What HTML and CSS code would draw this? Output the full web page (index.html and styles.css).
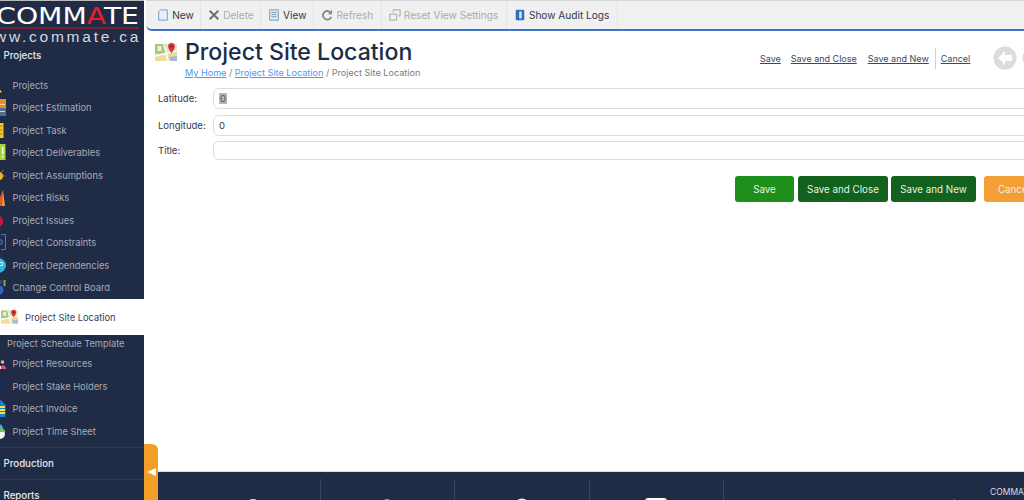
FILE: index.html
```html
<!DOCTYPE html>
<html lang="en">
<head>
<meta charset="utf-8">
<title>Project Site Location</title>
<link rel="stylesheet" href="styles.css">
</head>
<body>
<svg class="defs" width="0" height="0">
  <symbol id="map" viewBox="0 0 22 21">
    <rect x="0" y="2" width="22" height="17" fill="#dfe8c4"/>
    <path d="M0 2h11v10H0z" fill="#a9c67c"/>
    <path d="M0 14 9 11l3 8H0z" fill="#f0dc94"/>
    <path d="M12 12l10-2v9H14z" fill="#f0d98a"/>
    <path d="M14 15l8-1v5h-6z" fill="#9dbde0"/>
    <path d="M0 13 22 8v1.500L0 15z" fill="#fff" opacity=".85"/>
    <path d="M8 2l4 17h2L10 2z" fill="#fff" opacity=".85"/>
    <path d="M2.500 4h4v5h-4z" fill="#e8efd8"/>
    <path d="M16.500 1a3.400 3.400 0 0 1 3.400 3.400C19.900 7 16.500 11 16.500 11s-3.400-4-3.400-6.600A3.400 3.400 0 0 1 16.500 1z" fill="#d4383a"/>
    <circle cx="16.500" cy="4.400" r="1.100" fill="#7d1c20"/>
  </symbol>
</svg>
<div class="app">
  <aside class="sidebar">
    <div class="logo">
      <div class="logo-name"><span class="logo-word">COMM<span class="logo-a">A</span>TE</span></div>
      <div class="logo-url">www.commate.ca</div>
    </div>
    <div class="group-title group-first">Projects</div>
    <ul class="menu">
      <li class="item"><svg class="ico" viewBox="-11 0 17 17"><path d="M-1 10.500 2 15.500H-4z" fill="#f2c230"/></svg><span>Projects</span></li>
      <li class="item"><svg class="ico" viewBox="-11 0 17 17"><rect x="-2" y="0" width="8" height="9" fill="#ee8a2a"/><rect x="-2" y="9" width="8" height="8" fill="#56688f"/><rect x="0" y="5" width="5" height="1" fill="#fbd9b0"/><rect x="0" y="12" width="5" height="1" fill="#c5cfe0"/></svg><span>Project Estimation</span></li>
      <li class="item"><svg class="ico" viewBox="-11 0 17 17"><rect x="-3" y="1" width="6.500" height="15" fill="#f5c829"/><path d="M-1 4H2.500M-1 8H2.500M-1 12H2.500" stroke="#a5791a"/></svg><span>Project Task</span></li>
      <li class="item"><svg class="ico" viewBox="-11 0 17 17"><rect x="-3" y="0" width="8.500" height="16" fill="#a4d63c"/><rect x="2" y="3" width="1.500" height="7" fill="#fff"/><rect x="2" y="11.500" width="1.500" height="2" fill="#fff"/></svg><span>Project Deliverables</span></li>
      <li class="item"><svg class="ico" viewBox="-11 0 17 17"><circle cx="-1" cy="9" r="4" fill="#f0b429"/><path d="M-1 1v3M3 3 2 5M5 9H3" stroke="#a07a3a"/></svg><span>Project Assumptions</span></li>
      <li class="item"><svg class="ico" viewBox="-11 0 17 17"><path d="M3 1 5 17H-3z" fill="#ef9a22"/><path d="M3 1 2 17H-3z" fill="#e4562a"/></svg><span>Project Risks</span></li>
      <li class="item"><svg class="ico" viewBox="-11 0 17 17"><circle cx="-3" cy="9.500" r="6" fill="#d5103c"/></svg><span>Project Issues</span></li>
      <li class="item"><svg class="ico" viewBox="-11 0 17 17"><path d="M1 .5H5.500V15.500H1" fill="none" stroke="#5a76ad"/><path d="M0 6H2V10H0" fill="none" stroke="#5a76ad"/></svg><span>Project Constraints</span></li>
      <li class="item"><svg class="ico" viewBox="-11 0 17 17"><circle cx="-1.500" cy="8.500" r="7.500" fill="#2cb6dc"/><circle cx="1" cy="7" r="1.800" fill="none" stroke="#e8f7fb"/></svg><span>Project Dependencies</span></li>
      <li class="item"><svg class="ico" viewBox="-11 0 17 17"><circle cx="-1.500" cy="11" r="5" fill="#2f66c4"/><rect x="3.500" y="1" width="2" height="6" fill="#7ab648"/><rect x="0" y="1" width="2" height="4" fill="#3c4a66"/></svg><span>Change Control Board</span></li>
      <li class="item-active"><svg class="ico-active"><use href="#map"/></svg><span>Project Site Location</span></li>
      <li class="item-plain">Project Schedule Template</li>
      <li class="item"><svg class="ico" viewBox="-11 0 17 17"><circle cx="2.500" cy="7" r="1.800" fill="#e8b48c"/><path d="M0 14c0-5 6-5 6 0z" fill="#e8467a"/><rect x="-1" y="11" width="2" height="3" fill="#f3f3f3"/></svg><span>Project Resources</span></li>
      <li class="item"><svg class="ico" viewBox="-11 0 17 17"><rect x="1.500" y="1" width="2.500" height="15" fill="#14305e"/></svg><span>Project Stake Holders</span></li>
      <li class="item"><svg class="ico" viewBox="-11 0 17 17"><path d="M-3 5 1 0l4.500 5v12H-3z" fill="#1a7fd4"/><path d="M-3 7H5M-3 10H5M-3 13H5" stroke="#f5e23a" stroke-width="1.800"/></svg><span>Project Invoice</span></li>
      <li class="item"><svg class="ico" viewBox="-11 0 17 17"><circle cx="0" cy="11" r="5" fill="#f4f4f4"/><path d="M-3 7 1 1 4 7z" fill="#5fa8d3"/><path d="M-5 7H5V9H-5z" fill="#7fc241"/></svg><span>Project Time Sheet</span></li>
    </ul>
    <div class="group-title group-divided">Production</div>
    <div class="group-title group-divided">Reports</div>
  </aside>
  <button class="collapse" type="button" aria-label="Collapse"></button>
  <main class="main">
    <nav class="toolbar">
      <a class="tool"><svg class="tool-ico" viewBox="0 0 14 14"><path d="M4 1h8v12H2V3z" fill="#e8f1fa" stroke="#5f93c6"/></svg>New</a>
      <a class="tool tool-off"><svg class="tool-ico" viewBox="0 0 14 14"><path d="M2 2l10 10M12 2 2 12" stroke="#707070" stroke-width="2.400"/></svg>Delete</a>
      <a class="tool"><svg class="tool-ico" viewBox="0 0 14 14"><rect x="2" y="1" width="10" height="12" fill="#dfe8f2" stroke="#6f8fb0"/><path d="M4 4h6M4 6.500h6M4 9h6" stroke="#6f8fb0"/></svg>View</a>
      <a class="tool tool-off tool-wide"><svg class="tool-ico" viewBox="0 0 14 14"><path d="M12 9a5 5 0 1 1-1-5" fill="none" stroke="#8a8a8a" stroke-width="2.200"/><path d="M13 1v5H8z" fill="#8a8a8a"/></svg>Refresh</a>
      <a class="tool tool-off tool-wide"><svg class="tool-ico" viewBox="0 0 14 14"><path d="M1 6h8v7H1zM5 4V1h8v7h-2" fill="none" stroke="#9a9a9a"/></svg>Reset View Settings</a>
      <a class="tool tool-wide"><svg class="tool-ico" viewBox="0 0 14 14"><rect x="2" y="1" width="10" height="12" rx="1" fill="#2b74b8"/><rect x="6" y="3" width="3" height="8" fill="#cfe3f5"/></svg>Show Audit Logs</a>
    </nav>
    <section class="content">
      <header class="head">
        <svg class="page-ico"><use href="#map"/></svg>
        <div class="head-text">
          <h1 class="title">Project Site Location</h1>
          <div class="crumbs"><a class="crumb">My Home</a> / <a class="crumb">Project Site Location</a> / Project Site Location</div>
        </div>
        <div class="head-actions">
          <a class="act act-save">Save</a>
          <a class="act act-close">Save and Close</a>
          <a class="act act-new">Save and New</a>
          <a class="act act-cancel">Cancel</a>
          <svg class="nav-ico" viewBox="0 0 24 24"><circle cx="12" cy="12" r="11.500" fill="#dcdcdc"/><path d="M12 5 5 12l7 7v-4h7V9h-7z" fill="#fff"/></svg>
          <svg class="nav-ico" viewBox="0 0 24 24"><circle cx="12" cy="12" r="11.500" fill="#dcdcdc"/></svg>
        </div>
      </header>
      <form class="form">
        <div class="row row-lat"><label class="label">Latitude:</label><div class="field"><span class="sel">0</span></div></div>
        <div class="row row-lon"><label class="label">Longitude:</label><div class="field">0</div></div>
        <div class="row row-title"><label class="label">Title:</label><div class="field field-short"></div></div>
      </form>
      <div class="buttons">
        <a class="btn btn-save">Save</a>
        <a class="btn btn-dark btn-sc">Save and Close</a>
        <a class="btn btn-dark btn-sn">Save and New</a>
        <a class="btn btn-cancel">Cancel</a>
      </div>
    </section>
    <footer class="footer">
      <div class="foot-cell"><svg class="foot-ico" viewBox="0 0 16 16"><circle cx="8" cy="8" r="7" fill="#e8eaee"/></svg></div>
      <div class="foot-cell"><svg class="foot-ico" viewBox="0 0 16 16"><circle cx="8" cy="8" r="6" fill="none" stroke="#c9ced8" stroke-width="1.500"/></svg></div>
      <div class="foot-cell"><svg class="foot-ico" viewBox="0 0 16 16"><circle cx="8" cy="8" r="7.500" fill="#fff"/></svg></div>
      <div class="foot-cell"><svg class="foot-ico foot-ico-wide" viewBox="0 0 22 16"><rect x="0" y="0" width="22" height="16" rx="3" fill="#fff"/></svg></div>
      <div class="foot-info">
        <div class="foot-name">COMMATE</div>
        <div class="foot-small">+1 000 000 0000 | +1 000 000 0000 | info@commate.ca</div>
      </div>
    </footer>
  </main>
</div>
</body>
</html>
```
FILE: styles.css
```css
* { box-sizing: border-box; }
html, body { margin: 0; height: 500px; overflow: hidden; background: #fff; }
body { font-family: Inter, "Liberation Sans", sans-serif; font-size: 9.3px; color: #202c46; }
.defs { display: block; height: 0; }
.app { display: flex; width: 1024px; height: 500px; position: relative; overflow: hidden; }

/* Sidebar */
.sidebar { width: 144px; flex: none; height: 500px; overflow: hidden; background: #202c46; color: #a6abb7; }
.logo { height: 44px; border-top: 1px solid #bbb; overflow: hidden; white-space: nowrap; display: flex; flex-direction: column; align-items: flex-end; padding-right: 5px; }
.logo-name { font: 400 23.500px/21px "DejaVu Sans", sans-serif; color: #fff; margin-top: 5px; border-bottom: 2px solid #7b2236; width: 150px; text-align: right; flex: none; height: 23px; }
.logo-word { display: inline-block; transform: scaleX(1.2); transform-origin: right center; }
.logo-a { color: #e3202c; }
.logo-url { font: 400 15.500px/15px "Liberation Sans", sans-serif; color: #d5d8de; letter-spacing: 2.750px; margin-right: -2px; }
.group-title { color: #e6e8ec; font-size: 9.700px; font-weight: 500; padding-left: 3.500px; }
.group-first { line-height: 24px; }
.group-divided { border-top: 1px solid #2b3857; height: 32px; line-height: 31px; }
.menu { list-style: none; margin: 6px 0 4px; padding: 0; }
.item { height: 22.500px; display: flex; align-items: center; white-space: nowrap; }
.ico { width: 17px; height: 17px; margin-left: -11px; margin-right: 6.500px; flex: none; }
.item-active { height: 36px; background: #fff; color: #33405c; display: flex; align-items: center; white-space: nowrap; padding-left: 1px; }
.ico-active { width: 17px; height: 16px; margin-right: 7px; flex: none; }
.item-plain { height: 17.500px; line-height: 18px; padding-left: 7px; white-space: nowrap; }

/* Collapse tab */
.collapse { position: absolute; left: 144px; top: 444px; width: 14px; height: 62px; padding: 0; border: 0; border-radius: 0 6px 6px 0; background: #f39f27; }
.collapse::after { content: ""; position: absolute; left: 3px; top: 24px; width: 0; height: 0; border-style: solid; border-width: 4px 9px 4px 0; border-color: transparent #fff transparent transparent; }

/* Main */
.main { flex: 1; min-width: 0; height: 500px; display: flex; flex-direction: column; overflow: hidden; }
.toolbar { margin-left: 2px; height: 31px; flex: none; display: flex; background: #f0f0f0; border-top: 1px solid #d6d6d6; border-bottom: 2px solid #3f74c9; border-bottom-left-radius: 6px; padding-left: 4.500px; }
.tool { display: flex; align-items: center; height: 28px; padding: 0 6.700px; border-right: 1px solid #e4e4e4; color: #33384a; font-size: 10.100px; white-space: nowrap; }
.tool-wide { padding: 0 7.300px; }
.tool-off { color: #aaa; }
.tool-ico { width: 12px; height: 12px; margin-right: 3px; flex: none; }

.content { flex: 1; min-height: 0; width: 920px; padding-left: 11px; }
.head { display: flex; height: 57px; }
.page-ico { width: 22px; height: 21px; margin-top: 11px; margin-right: 8px; flex: none; }
.head-text { width: 300px; flex: none; }
.title { margin: 7px 0 0; font-size: 23.100px; line-height: 28px; font-weight: 500; color: #202c46; white-space: nowrap; }
.crumbs { margin-top: 0; font-size: 9.100px; line-height: 13px; color: #777b84; white-space: nowrap; }
.crumb { color: #4a9af0; text-decoration: underline; }
.head-actions { flex: none; display: flex; align-items: center; height: 28px; margin-top: 13px; margin-left: 275px; white-space: nowrap; }
.act { font-size: 9px; color: #3c4660; text-decoration: underline; }
.act-close { margin-left: 10px; }
.act-new { margin-left: 11px; }
.act-cancel { margin-left: 6px; padding-left: 5px; border-left: 1px solid #b9d3ee; height: 21px; line-height: 21px; }
.nav-ico { width: 24px; height: 24px; flex: none; margin-left: 5px; }
.act-cancel + .nav-ico { margin-left: 23px; }

.form { margin: 0; }
.row { display: flex; align-items: center; }
.row-lat { height: 21px; }
.row-lon { margin-top: 6px; height: 21px; }
.row-title { margin-top: 5px; height: 19px; }
.label { width: 58px; padding-left: 3px; flex: none; color: #33384a; font-size: 9.500px; }
.field { flex: 1; height: 100%; border: 1px solid #dcdcdc; border-radius: 6px; display: flex; align-items: center; padding-left: 5px; color: #33384a; font-size: 9.500px; }
.sel { background: #b4b4b4; color: #555; padding: 0 1px; }

.buttons { display: flex; margin-top: 16px; margin-left: 580px; height: 26px; }
.btn { display: flex; align-items: center; justify-content: center; height: 26px; border-radius: 3px; color: #e9f2e6; font-size: 9.800px; flex: none; }
.btn-save { width: 59px; background: #1d8f1b; }
.btn-dark { background: #12611c; }
.btn-sc { width: 90px; margin-left: 4px; }
.btn-sn { width: 85px; margin-left: 3px; }
.btn-cancel { width: 60px; margin-left: 8px; background: #f39f35; }

/* Footer */
.footer { height: 29px; flex: none; background: #202c46; border-top: 1px solid #d7dae0; display: flex; overflow: hidden; padding-top: 7px; }
.foot-cell { width: 134.500px; height: 40px; flex: none; border-right: 1px solid #3a4660; display: flex; justify-content: center; padding-top: 19px; }
.foot-cell:first-child { width: 176.500px; padding-left: 42px; }
.foot-ico { width: 16px; height: 16px; }
.foot-ico-wide { width: 22px; }
.foot-info { flex: 1; min-width: 0; white-space: nowrap; text-align: left; }
.foot-name { color: #d8dbe2; font-size: 8.500px; line-height: 11px; margin-top: 8px; padding-left: 266px; }
.foot-small { color: #7f8798; font-size: 8px; line-height: 10px; padding-left: 161px; }
```
